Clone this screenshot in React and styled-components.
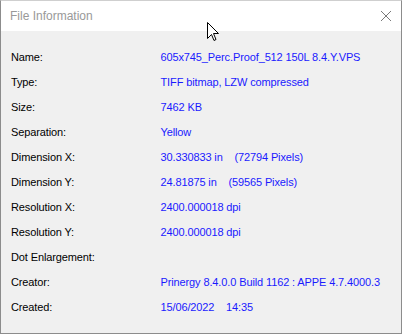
import React from "react";
import styled, { createGlobalStyle } from "styled-components";

const Global = createGlobalStyle`
  html, body { margin: 0; padding: 0; background: #f0f0f0; }
  body { font-family: "Liberation Sans", Arial, sans-serif; }
`;

const Window = styled.div`
  position: relative;
  width: 402px;
  height: 334px;
  box-sizing: border-box;
  border: 1px solid #8c8c8c;
  border-top-color: #cfcfcf;
  background: #f0f0f0;
  display: flex;
  flex-direction: column;
`;

const TitleBar = styled.div`
  height: 30px;
  background: #ffffff;
  display: flex;
  align-items: center;
  justify-content: space-between;
  padding: 0 9px 0 9px;
  flex-shrink: 0;
`;

const Title = styled.span`
  font-size: 12px;
  line-height: 30px;
  color: #999999;
`;

const Content = styled.div`
  padding: 14px 10px 0 10px;
  display: grid;
  grid-template-columns: 149.5px 1fr;
  grid-auto-rows: 25px;
  line-height: 25px;
  font-size: 11px;
  letter-spacing: -0.12px;
`;

const Label = styled.div`
  color: #000000;
  white-space: nowrap;
`;

const Value = styled.div`
  color: #1a1aff;
  white-space: pre;
`;

const Cursor = styled.svg`
  position: absolute;
  left: 206px;
  top: 21px;
`;

const rows = [
  ["Name:", "605x745_Perc.Proof_512 150L 8.4.Y.VPS"],
  ["Type:", "TIFF bitmap, LZW compressed"],
  ["Size:", "7462 KB"],
  ["Separation:", "Yellow"],
  ["Dimension X:", "30.330833 in    (72794 Pixels)"],
  ["Dimension Y:", "24.81875 in    (59565 Pixels)"],
  ["Resolution X:", "2400.000018 dpi"],
  ["Resolution Y:", "2400.000018 dpi"],
  ["Dot Enlargement:", ""],
  ["Creator:", "Prinergy 8.4.0.0 Build 1162 : APPE 4.7.4000.3"],
  ["Created:", "15/06/2022    14:35"],
];

export default function App() {
  return (
    <>
      <Global />
      <Window>
        <TitleBar>
          <Title>File Information</Title>
          <svg width="12" height="12" viewBox="0 0 12 12">
            <path d="M1 1 L11 11 M11 1 L1 11" stroke="#7a7a7a" strokeWidth="1" fill="none" />
          </svg>
        </TitleBar>
        <Content>
          {rows.map(([l, v]) => (
            <React.Fragment key={l}>
              <Label>{l}</Label>
              <Value>{v}</Value>
            </React.Fragment>
          ))}
        </Content>
        <Cursor width="13" height="21" viewBox="0 0 13 21">
          <path d="M0.5 0.5 L0.5 16.5 L4.5 12.5 L7 18.5 L9 17.5 L6.5 11.5 L11.5 11.5 Z" fill="#ffffff" stroke="#000000" strokeWidth="1" strokeLinejoin="miter" />
        </Cursor>
      </Window>
    </>
  );
}
